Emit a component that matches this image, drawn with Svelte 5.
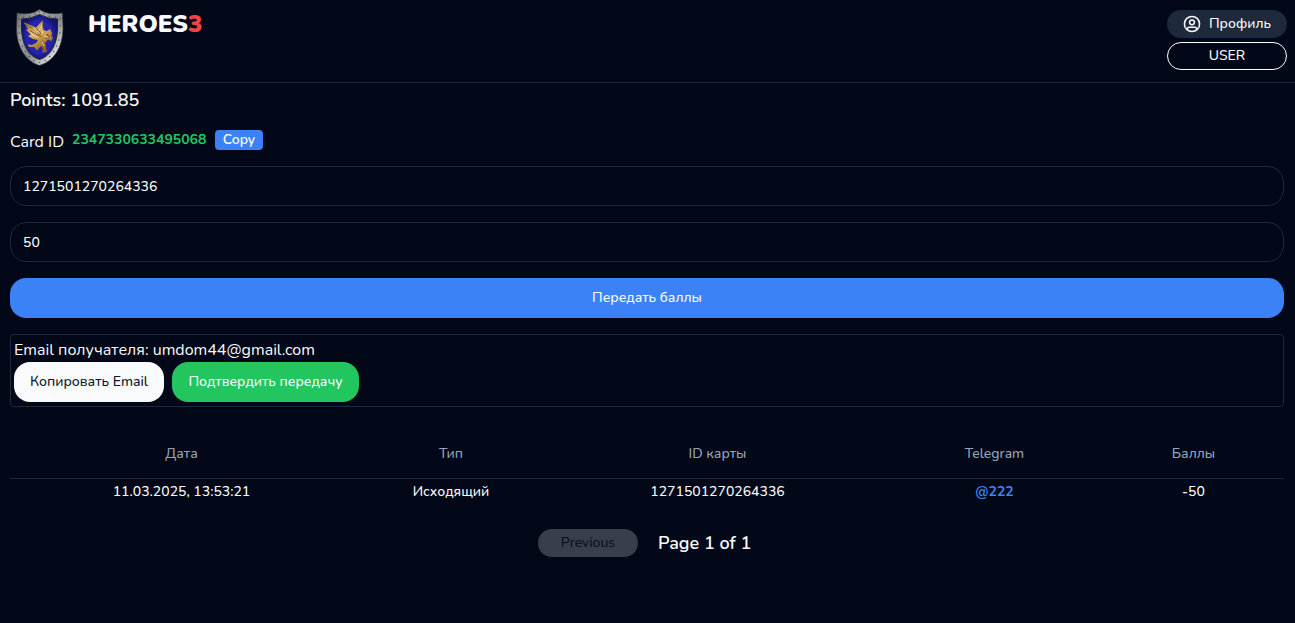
<script>
  const rivets = [
    [7.5, 8.3], [13.5, 7.3], [19, 4.8], [23.5, 2.8], [28, 4.8], [33.5, 7.3], [39.5, 8.3], [44, 10], [3.2, 10], [3, 17], [3.2, 24],
    [4.2, 31], [6.5, 37], [9.5, 42.5], [13.3, 47.5], [18, 51.5], [23.5, 53.6], [29, 51.5], [33.8, 47.5], [37.6, 42.5],
    [40.6, 37], [43, 31], [44, 24], [44.2, 17]
  ];
  const columns = ['Дата', 'Тип', 'ID карты', 'Telegram', 'Баллы'];
  let card = $state('1271501270264336');
  let amount = $state('50');
</script>

<div class="page">
  <header>
    <svg class="logo" width="48" height="58" viewBox="0 0 48 58">
      <defs>
        <linearGradient id="steel" x1="0" y1="0" x2="1" y2="1">
          <stop offset="0" stop-color="#5f6163" />
          <stop offset=".3" stop-color="#a6a8a9" />
          <stop offset=".55" stop-color="#85888a" />
          <stop offset=".8" stop-color="#d4d6d7" />
          <stop offset="1" stop-color="#5b5e60" />
        </linearGradient>
        <radialGradient id="field">
          <stop offset="0" stop-color="#2020a0" />
          <stop offset=".7" stop-color="#2525ae" />
          <stop offset="1" stop-color="#14146c" />
        </radialGradient>
        <linearGradient id="gold" x1="0" y1="0" x2=".6" y2="1">
          <stop offset="0" stop-color="#8f6426" />
          <stop offset=".45" stop-color="#dfb566" />
          <stop offset="1" stop-color="#94601c" />
        </linearGradient>
      </defs>
      <path d="M1 4Q15 6.500 23.500 .5Q32 6.500 46.500 4L47 20C46.500 38 38.500 52 23.500 56.500C9 52 1 38 .5 20Z" fill="url(#steel)" stroke="#333638" stroke-width=".7" />
      <path d="M5.500 10Q15 10 23.500 5.500Q32 10 41.500 10V20C41 35 35 47 23.500 50.500C12 47 6 35 5.500 20Z" fill="url(#field)" stroke="#24252e" stroke-width="1" />
      {#each rivets as [x, y]}
        <circle cx={x} cy={y} r=".7" fill="#43464a" />
      {/each}
      <path d="M7.500 13L20 18.500L26.500 11.500L27.500 21L31 22L34 20L36 24L35.500 27L37 29L35 32L32 30.500L29 34L30.500 41L31 43L26 43.500L27 41L25 37L21 41.500L18 38L13 38L12 35.500L16 36L20 34L22 31L17 30L12 27L15 25.500L10 21L12 20Z" fill="url(#gold)" />
      <path d="M10 15.500L21 22L25 28M20 18.500L25 25M27 15L26 22M14 21.500L23 27M32 25L30 30M27 32L27 40M31 26L34 28" fill="none" stroke="#6b421b" stroke-width=".8" />
      <path d="M17 19L24 24.500M25.500 16L26.500 25M28 27L32 28M26 33L28 37M14 24L22 28.500" fill="none" stroke="#f7dc9c" stroke-width="1" />
    </svg>
    <div class="brand">HEROES<span>3</span></div>
    <div class="account">
      <button class="profile">
        <svg width="18" height="18" viewBox="0 0 18 18" fill="none" stroke="currentColor" stroke-width="1.5">
          <circle cx="9" cy="9" r="7.6" />
          <circle cx="9" cy="7.3" r="2.4" />
          <path d="M4.300 14.500V14.200C4.300 12.800 5 12.200 6.400 12.200H11.600C13 12.200 13.700 12.800 13.700 14.200V14.500" />
        </svg>
        <span>Профиль</span>
      </button>
      <button class="user"><span>USER</span></button>
    </div>
  </header>

  <main>
    <div class="points">Points: 1091.85</div>
    <div class="card-row">
      <span class="card-label">Card ID</span>
      <span class="card-id">2347330633495068</span>
      <button class="copy">Copy</button>
    </div>
    <input bind:value={card} />
    <input bind:value={amount} />
    <button class="send">Передать баллы</button>
    <section>
      <div class="email">Email получателя: umdom44@gmail.com</div>
      <div class="actions">
        <button class="light">Копировать Email</button>
        <button class="confirm">Подтвердить передачу</button>
      </div>
    </section>
    <div class="table">
      <div class="row head">
        {#each columns as c}<span>{c}</span>{/each}
      </div>
      <div class="row body">
        <span>11.03.2025, 13:53:21</span>
        <span>Исходящий</span>
        <span>1271501270264336</span>
        <span class="tg">@222</span>
        <span>-50</span>
      </div>
    </div>
    <div class="pager">
      <button class="prev" disabled>Previous</button>
      <span>Page 1 of 1</span>
    </div>
  </main>
</div>

<style>
  :global(body) { background: #020817; }
  * { box-sizing: border-box; }
  .page {
    height: 623px;
    overflow: hidden;
    background: #020817;
    color: #f8fafc;
    font: 500 14px/20px Nunito, Lato, 'Open Sans', sans-serif;
  }
  button { font: inherit; color: inherit; border: 0; padding: 0; white-space: nowrap; }
  header { display: flex; align-items: flex-start; height: 83px; border-bottom: 1px solid #1e293b; padding: 9px 8px 0 16px; }
  .logo { flex: none; margin-right: 24px; }
  .brand { font-size: 24px; font-weight: 900; line-height: 30px; }
  .brand span { color: #ef4444; }
  .account { margin-left: auto; display: flex; flex-direction: column; gap: 4px; padding-top: 1px; }
  .account button { width: 120px; height: 28px; border-radius: 14px; display: flex; align-items: center; justify-content: center; }
  .account .profile { background: #1e293b; gap: 8px; }
  .account .user { background: transparent; border: 1px solid #fff; }
  main { padding: 3px 11px 0 10px; }
  .points { font-size: 18px; font-weight: 600; line-height: 28px; }
  .card-row { display: flex; align-items: flex-start; height: 36px; margin-top: 16px; }
  .card-label { font-size: 16px; font-weight: 400; line-height: 24px; width: 62px; }
  .card-id { width: 143px; color: #22c55e; font-weight: 700; }
  .copy { width: 48px; height: 20px; border-radius: 4px; background: #3b82f6; font-weight: 600; }
  input {
    display: block; width: 100%; height: 40px; margin: 0 0 16px; padding: 0 12px;
    border: 1px solid #1e293b; border-radius: 16px; background: transparent; color: inherit; font: inherit; outline: 0;
  }
  .send { display: block; width: 100%; height: 40px; border-radius: 16px; background: #3b82f6; }
  section { margin-top: 16px; height: 73px; border: 1px solid #1e293b; border-radius: 4px; padding: 3px; }
  .email { font-size: 16px; font-weight: 400; line-height: 24px; }
  .actions { display: flex; gap: 8px; }
  .actions button { height: 40px; border-radius: 16px; }
  .actions .light { width: 150px; background: #f8fafc; color: #0f172a; }
  .actions .confirm { width: 187px; background: #22c55e; }
  .table { margin-top: 23px; }
  .row { display: grid; grid-template-columns: 343px 196px 337px 217px 181px; text-align: center; white-space: nowrap; }
  .head { height: 49px; line-height: 48px; border-bottom: 1px solid #1e293b; color: #94a3b8; }
  .body { height: 26px; line-height: 26px; }
  .tg { color: #3b82f6; font-weight: 700; }
  .pager { display: flex; align-items: center; margin: 24px 0 0 528px; height: 28px; gap: 20px; font-size: 18px; font-weight: 600; }
  .prev { width: 100px; height: 28px; border-radius: 14px; background: #383e4b; color: #0b1222; font-size: 14px; font-weight: 500; }
</style>
